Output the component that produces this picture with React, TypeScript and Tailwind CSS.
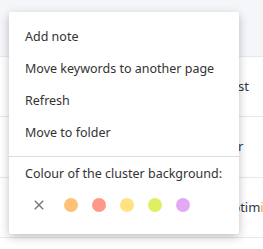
import React from 'react';

const colours = ['bg-[#ffc078]', 'bg-[#ff9889]', 'bg-[#ffe383]', 'bg-[#e0ef62]', 'bg-[#e3a9f5]'];

const items = ['Add note', 'Move keywords to another page', 'Refresh', 'Move to folder'];

export default function App() {
  return (
    <div className="relative w-[263px] h-[249px] overflow-hidden bg-white font-['Noto_Sans',sans-serif] text-[12.5px]">
      {/* Table behind */}
      <div className="h-[57px] bg-[#f5f6f9] border-b border-[#e6e8f1]" />
      <div className="h-[60px] border-b border-[#e6e8f1] flex items-center pl-[222px] text-[#2d3a4a] text-[13px]">Cost</div>
      <div className="h-[61px] border-b border-[#e6e8f1] flex items-center pl-[208px] text-[#2d3a4a] text-[13px]">Timer</div>
      <div className="h-[60px] border-b border-[#e6e8f1] flex items-center pl-[222px] text-[#2d3a4a] text-[13px] whitespace-nowrap">
        Optim<span className="text-[#f5a623]">ization</span>
      </div>

      {/* Context menu */}
      <div className="absolute left-[9px] top-[12px] w-[230px] rounded-[2px] bg-white shadow-[0_3px_10px_rgba(0,0,0,0.25)] text-[#333]">
        <div className="pt-[9px] pb-[7px]">
          {items.map(label => (
            <div key={label} className="h-[32px] flex items-center px-[16px] whitespace-nowrap">
              {label}
            </div>
          ))}
        </div>
        <div className="border-t border-[#dcdde2] px-[16px] pt-[7px] pb-[22px]">
          <div className="leading-[20px] whitespace-nowrap">Colour of the cluster background:</div>
          <div className="flex items-center gap-[14px] mt-[14px] pl-[9px]">
            <svg width="10" height="10" viewBox="0 0 10 10" className="mr-[6px]">
              <path d="M0.8 0.8 L9.2 9.2 M9.2 0.8 L0.8 9.2" stroke="#7a7a7a" strokeWidth="1.5" />
            </svg>
            {colours.map(c => (
              <span key={c} className={`w-[14px] h-[14px] rounded-full ${c}`} />
            ))}
          </div>
        </div>
      </div>
    </div>
  );
}
